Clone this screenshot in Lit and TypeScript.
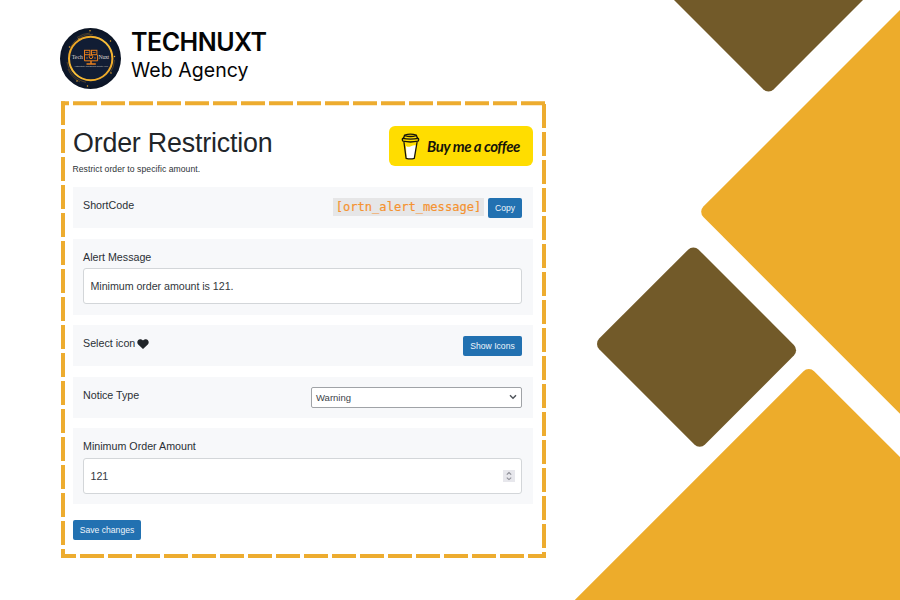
import { LitElement, html, css, svg } from "lit";
import { customElement } from "lit/decorators.js";

@customElement("brand-logo")
class BrandLogo extends LitElement {
  static styles = css`
    :host { display: block; width: 61px; height: 61px; }
    svg { display: block; }
    .name { font: 5.8px "Liberation Serif", serif; fill: #d9d3cc; }
    .tag { font: 2.3px "Liberation Sans", sans-serif; fill: #c9c4bd; }
  `;
  render() {
    const dots = [[30, 2.8], [41, 12.5], [50.5, 13], [54.5, 28.5], [17, 53], [27.5, 58], [9.5, 19], [19, 11], [51, 45]];
    return html`<svg width="61" height="61" viewBox="0 0 61 61">
      <defs>
        <radialGradient id="night"><stop offset="0" stop-color="#16263f"/><stop offset="0.75" stop-color="#0f1b31"/><stop offset="1" stop-color="#0b1424"/></radialGradient>
        <linearGradient id="gold" x1="0" y1="0" x2="1" y2="1"><stop offset="0" stop-color="#e89a1c"/><stop offset="0.5" stop-color="#fbc23a"/><stop offset="1" stop-color="#e8a022"/></linearGradient>
      </defs>
      <circle cx="30.5" cy="30.5" r="30.5" fill="url(#night)"/>
      <g fill="none" stroke="#8a6224" stroke-width="0.5">
        <path d="M10 20A24 24 0 0 1 33 6.3"/><path d="M17 9.5A26 26 0 0 1 30 5"/>
        <path d="M7 34A24 24 0 0 0 26 54.3"/><path d="M8 41A26 26 0 0 0 20 54"/>
        <path d="M54.5 32A24 24 0 0 1 50 45"/>
      </g>
      ${dots.map(([x, y]) => svg`<circle cx=${x} cy=${y} r="0.75" fill="#f0ab2b"/>`)}
      <circle cx="30.7" cy="30.5" r="21.7" fill="#111d34" stroke="url(#gold)" stroke-width="2"/>
      <text class="name" x="11.8" y="30.8" textLength="11">Tech</text>
      <text class="name" x="38.6" y="30.8" textLength="10.6">Nuxt</text>
      <g fill="none" stroke="#e87f1c" stroke-width="1">
        <rect x="24.5" y="22.3" width="5.4" height="4.4"/><rect x="31.5" y="22.3" width="5.4" height="4.4"/>
        <path d="M24.5 27V32.8H37.6V27"/><circle cx="31" cy="28.8" r="1.8"/>
        <path d="M31 33V35.6M26.5 36H35.8" stroke-width="1.5"/><path d="M25.5 24.5H28.5M32.5 24.5H35.5M26 30H28M34 30H36" stroke-width="0.7"/>
      </g>
      <text class="tag" x="14" y="39.4" textLength="34">Authenticity and Brand Create your</text>
    </svg>`;
  }
}

@customElement("setting-row")
class SettingRow extends LitElement {
  static properties = { label: {}, stacked: { type: Boolean, reflect: true } };
  static styles = css`
    :host { display: flex; box-sizing: border-box; height: 41px; padding: 11px 11px 0 10px; background: #f7f8fa; justify-content: space-between; align-items: flex-start; }
    :host([stacked]) { flex-direction: column; justify-content: flex-start; align-items: stretch; height: 76px; }
    .label { font-size: 10.7px; line-height: 15px; color: #2b3035; display: flex; align-items: center; gap: 2px; white-space: nowrap; }
    :host([stacked]) .label { margin-bottom: 3.5px; }
  `;
  render() {
    return html`<div class="label"><span>${(this as any).label}</span><slot name="icon"></slot></div><slot></slot>`;
  }
}

@customElement("app-root")
class AppRoot extends LitElement {
  static styles = css`
    :host { display: block; position: relative; width: 900px; height: 600px; overflow: hidden; background: #fff; font-family: "Liberation Sans", Arial, sans-serif; color: #212529; }
    svg { display: block; flex: none; }
    .shapes, .dashes { position: absolute; inset: 0; pointer-events: none; }
    .page { position: relative; width: 485px; padding: 28px 0 0 60px; }
    .brand { display: flex; gap: 10px; height: 61px; font-family: Inter, sans-serif; color: #050505; white-space: nowrap; }
    .title { font-size: 25px; line-height: 29px; font-weight: 600; letter-spacing: -0.5px; }
    .subtitle { font-size: 19.5px; line-height: 27px; letter-spacing: 0.05px; }
    .panel { width: 460px; margin: 37px 0 0 13px; }
    .head { display: flex; justify-content: space-between; height: 61px; }
    h1 { margin: 1px 0 0 0; font-size: 26.8px; line-height: 32px; font-weight: 400; letter-spacing: -0.18px; white-space: nowrap; }
    .hint { margin: 5px 0 0 -0.5px; font-size: 8.6px; line-height: 11px; letter-spacing: 0.06px; color: #2d3236; white-space: nowrap; }
    .coffee { display: flex; align-items: center; box-sizing: border-box; width: 144px; height: 40px; padding-left: 12px; gap: 7px; border-radius: 6px; background: #fd0; color: #17150a; }
    .script { font: italic 700 15px "Lato", cursive; letter-spacing: -0.46px; white-space: nowrap; }
    .rows { display: flex; flex-direction: column; gap: 10.5px; }
    .code-line { display: flex; gap: 4px; }
    code { width: 151px; height: 18px; line-height: 19px; text-align: center; background: #e6e6e7; color: #f59331; font-family: "DejaVu Sans Mono", monospace; font-size: 12.1px; -webkit-text-stroke: 0.2px #f59331; }
    .btn { display: block; box-sizing: border-box; border: 0; padding: 0; margin: 0; height: 20px; border-radius: 2px; background: #2271b1; color: #eef5fb; font: 8.6px/20px "Liberation Sans", Arial, sans-serif; text-align: center; white-space: nowrap; }
    .copy { width: 34px; } .icons { width: 59px; } .save { width: 68px; margin-top: 15.5px; }
    .field { display: flex; align-items: center; justify-content: space-between; box-sizing: border-box; height: 36px; padding: 0 6px 0 6.5px; border: 1px solid #d3d6d9; border-radius: 3px; background: #fff; font-size: 10.7px; letter-spacing: -0.05px; color: #33383d; }
    .select { display: flex; align-items: center; justify-content: space-between; box-sizing: border-box; width: 211.5px; height: 20.5px; margin-top: -0.5px; padding: 0 4.5px; border: 1px solid #a0a3a7; border-radius: 2px; background: #fff; font-size: 9.5px; color: #3c434a; }
  `;

  render() {
    return html`
      <svg class="shapes" width="900" height="600" viewBox="0 0 900 600">
        <path fill="#725a29" d="M674 0L763.2 89.2A7.5 7.5 0 0 0 773.8 89.2L863 0Z"/>
        <path fill="#edac2b" d="M900 10L703.4 206.5A7.5 7.5 0 0 0 703.4 217.1L900 413.7Z"/>
        <path fill="#725a29" d="M688.1 249.7A7.5 7.5 0 0 1 698.7 249.7L793.9 345A7.5 7.5 0 0 1 793.9 355.6L705 444.5A7.5 7.5 0 0 1 694.4 444.5L599.2 349.2A7.5 7.5 0 0 1 599.2 338.6Z"/>
        <path fill="#edac2b" d="M574.8 600L803.5 371.3A7.5 7.5 0 0 1 814.1 371.3L900 457V600Z"/>
      </svg>
      <svg class="dashes" width="900" height="600" viewBox="0 0 900 600">
        <g stroke="#edac2f" stroke-width="4" stroke-dasharray="24 4">
          <path d="M61 103.3H546" stroke-dashoffset="16"/>
          <path d="M63 101.3V558" stroke-dashoffset="0.3"/>
          <path d="M544 104V558"/>
          <path d="M61 556H546" stroke-dashoffset="9"/>
        </g>
      </svg>
      <main class="page">
        <header class="brand">
          <brand-logo></brand-logo>
          <div><div class="title">TECHNUXT</div><div class="subtitle">Web Agency</div></div>
        </header>
        <section class="panel">
          <div class="head">
            <div><h1>Order Restriction</h1><p class="hint">Restrict order to specific amount.</p></div>
            <div class="coffee">
              <svg width="19" height="27" viewBox="0 0 19 27" fill="none" stroke="#17150a" stroke-width="1.3" stroke-linejoin="round" stroke-linecap="round">
                <path d="M5 13Q7 14.6 10 13.2T15.2 12.6L13.3 25.4Q9.5 26.6 5.6 25.4Z" fill="#fff" stroke="none"/>
                <path d="M3 9.5L5.1 25.3Q9.4 26.5 13.3 25.3L16 9.5"/>
                <path d="M1.5 5.4Q9.5 7 17.4 5.4Q18 7.2 17 8.2Q9.5 9.8 2 8.2Q1 7 1.5 5.4ZM2.6 5.2L3.6 2Q9.4 0.2 15.3 2L16.4 5.2M4 2.6Q9.5 4.4 15 2.6"/>
              </svg>
              <span class="script">Buy me a coffee</span>
            </div>
          </div>
          <div class="rows">
            <setting-row label="ShortCode">
              <div class="code-line"><code>[ortn_alert_message]</code><button class="btn copy">Copy</button></div>
            </setting-row>
            <setting-row label="Alert Message" stacked><div class="field">Minimum order amount is 121.</div></setting-row>
            <setting-row label="Select icon">
              <svg slot="icon" width="12" height="10" viewBox="0 0 12 10"><path fill="#212529" d="M6 10L1.2 5.6C-.6 3.6.4.2 3.2.2 4.5.2 5.4.8 6 1.6 6.6.8 7.5.2 8.8.2 11.6.2 12.6 3.6 10.8 5.6Z"/></svg>
              <button class="btn icons">Show Icons</button>
            </setting-row>
            <setting-row label="Notice Type">
              <div class="select"><span>Warning</span><svg width="8" height="6" viewBox="0 0 8 6"><path d="M1 1.2L4 4.3L7 1.2" fill="none" stroke="#50555b" stroke-width="1.4"/></svg></div>
            </setting-row>
            <setting-row label="Minimum Order Amount" stacked>
              <div class="field"><span>121</span><svg width="12" height="12" viewBox="0 0 12 12"><rect width="12" height="12" fill="#e7e7ec"/><path d="M3.8 4.6L6 2.6L8.2 4.6M3.8 7.6L6 9.6L8.2 7.6" fill="none" stroke="#8b8c94" stroke-width="1.1"/></svg></div>
            </setting-row>
          </div>
          <button class="btn save">Save changes</button>
        </section>
      </main>`;
  }
}
